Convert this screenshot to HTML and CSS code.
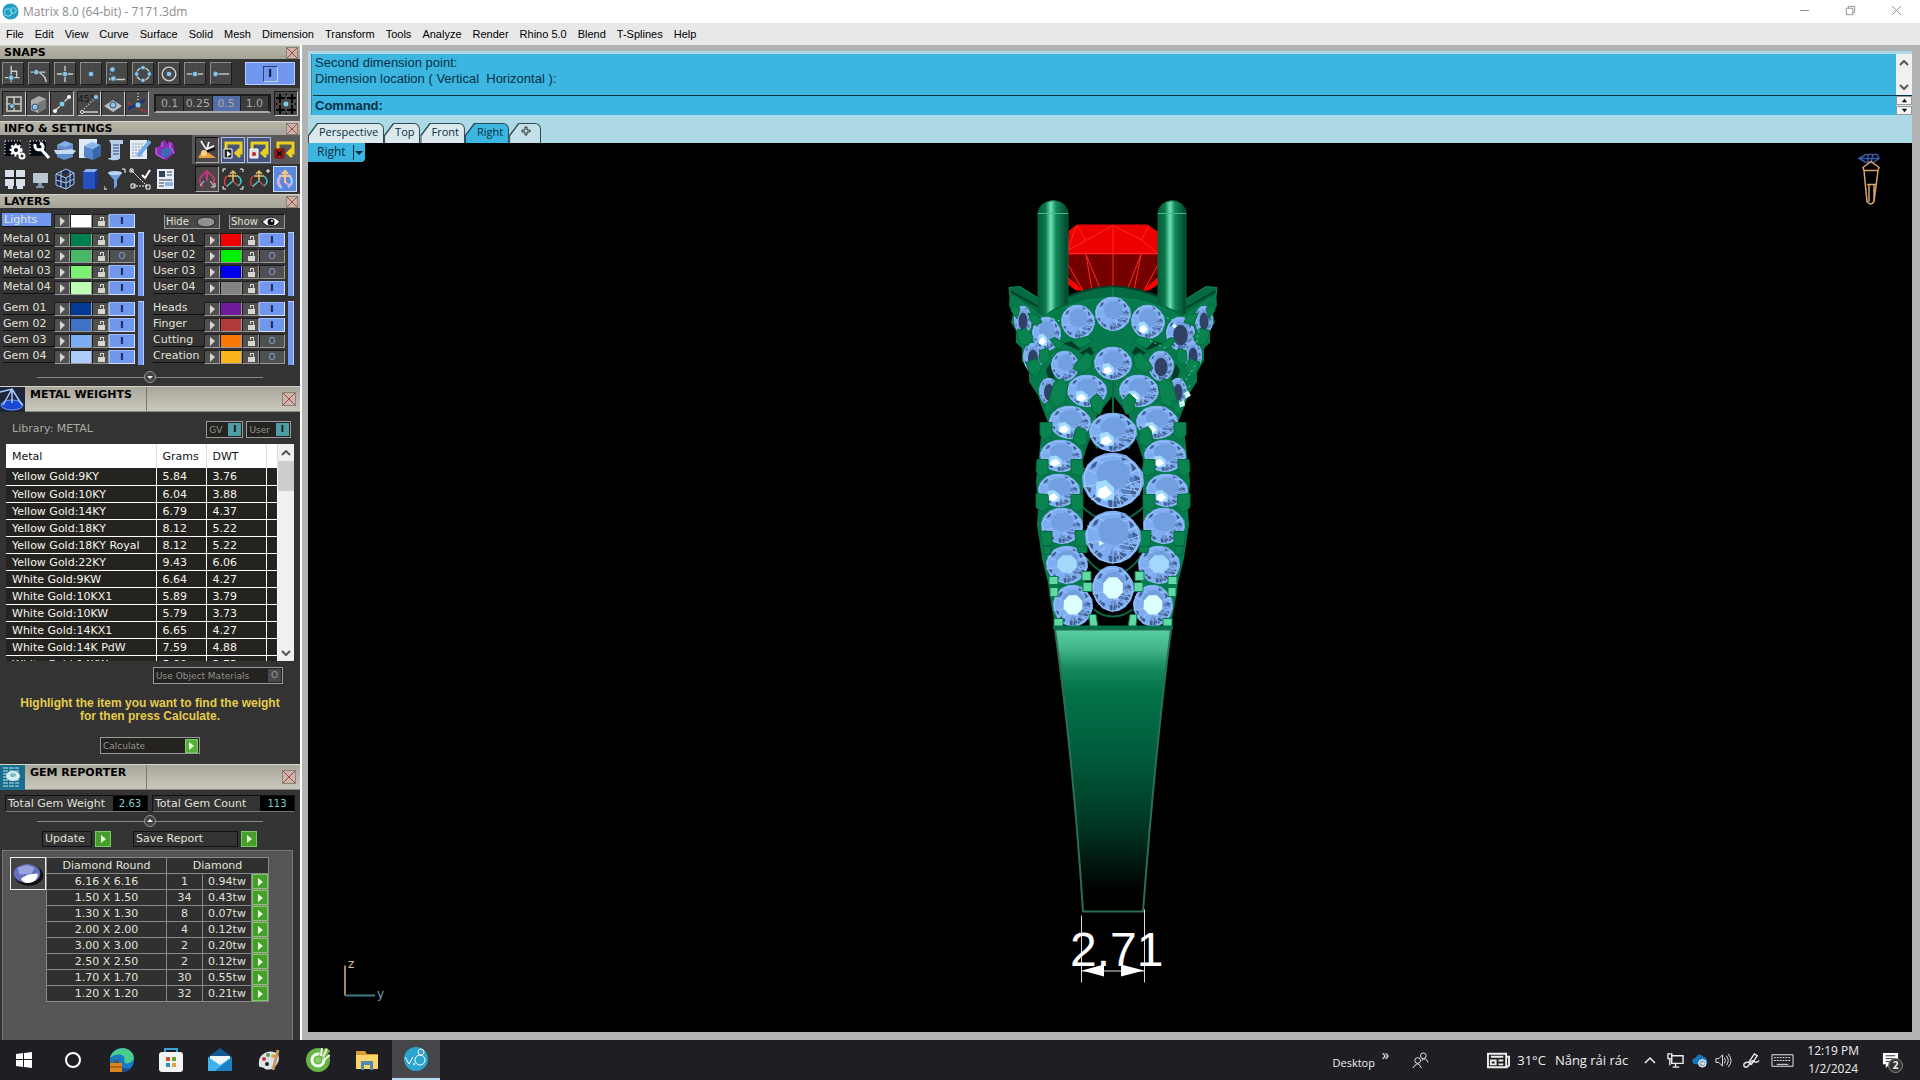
FILE: index.html
```html
<!DOCTYPE html>
<html lang="en">
<head>
    <meta charset="UTF-8">
    <meta name="viewport" content="width=device-width, initial-scale=1.0">
    <title>Matrix 8.0 (64-bit) - 7171.3dm</title>
    <link rel="stylesheet" href="styles.css">
</head>
<body>
    <header class="titlebar">
        <svg class="app-icon" viewBox="0 0 18 18"><circle cx="9" cy="9" r="8.500" fill="#239dc4"/><circle cx="6.500" cy="10" r="4" fill="none" stroke="#8fe0f5"/><circle cx="12" cy="8" r="3" fill="none" stroke="#8fe0f5"/></svg>
        <span class="title">Matrix 8.0 (64-bit) - 7171.3dm</span>
        <button class="win-btn" aria-label="Minimize"><svg viewBox="0 0 12 12"><path d="M1 6h10"/></svg></button>
        <button class="win-btn" aria-label="Restore"><svg viewBox="0 0 12 12"><path d="M1.500 3.500h7v7h-7zM3.500 3.500v-2h7v7h-2"/></svg></button>
        <button class="win-btn" aria-label="Close"><svg viewBox="0 0 12 12"><path d="M1 1l10 10M11 1L1 11"/></svg></button>
    </header>

    <nav class="menu">
        <a href="#">File</a><a href="#">Edit</a><a href="#">View</a><a href="#">Curve</a><a href="#">Surface</a><a href="#">Solid</a><a href="#">Mesh</a><a href="#">Dimension</a><a href="#">Transform</a><a href="#">Tools</a><a href="#">Analyze</a><a href="#">Render</a><a href="#">Rhino 5.0</a><a href="#">Blend</a><a href="#">T-Splines</a><a href="#">Help</a>
    </nav>

    <main>
        <aside>
            <div class="bar"><h2>SNAPS</h2><button class="close" aria-label="Close snaps"></button></div>
            <section class="snaps">
                <button class="tool" aria-label="Perpendicular"><svg viewBox="0 0 22 22"><path class="w" d="M9 2v18M2 15h16M9 8h6v6"/><circle class="dot" cx="9" cy="15" r="3"/></svg></button>
                <button class="tool" aria-label="Tangent"><svg viewBox="0 0 22 22"><path class="w" d="M2 9h16M7 9c6 0 11 4 12 11"/><circle class="dot" cx="8" cy="9" r="3"/></svg></button>
                <button class="tool" aria-label="Intersection"><svg viewBox="0 0 22 22"><path class="w" d="M11 2v18M2 11h18"/><circle class="dot" cx="11" cy="11" r="3"/></svg></button>
                <button class="tool" aria-label="Point"><svg viewBox="0 0 22 22"><circle class="dot" cx="11" cy="11" r="3"/></svg></button>
                <button class="tool" aria-label="Knot"><svg viewBox="0 0 22 22"><path class="w" d="M8 17h12M3 11h1M3 15v2h3"/><circle class="dot" cx="6" cy="6" r="3"/><circle class="dot" cx="7" cy="16" r="3"/></svg></button>
                <button class="tool" aria-label="Quad"><svg viewBox="0 0 22 22"><circle class="w" cx="11" cy="11" r="7"/><circle class="dot" cx="11" cy="4" r="2.500"/><circle class="dot" cx="11" cy="18" r="2.500"/><circle class="dot" cx="4" cy="11" r="2.500"/><circle class="dot" cx="18" cy="11" r="2.500"/></svg></button>
                <button class="tool" aria-label="Center"><svg viewBox="0 0 22 22"><circle class="w" cx="11" cy="11" r="7.500"/><circle class="dot" cx="11" cy="11" r="3"/></svg></button>
                <button class="tool" aria-label="Midpoint"><svg viewBox="0 0 22 22"><path class="w" d="M2 11h18"/><circle class="dot" cx="11" cy="11" r="3"/></svg></button>
                <button class="tool" aria-label="End"><svg viewBox="0 0 22 22"><path class="w" d="M5 11h15"/><circle class="dot" cx="5" cy="11" r="3"/></svg></button>
                <button class="power" aria-label="Snaps on"><i>I</i></button>
            </section>
            <section class="snaps second">
                <div class="group">
                    <button class="tool" aria-label="Grid snap"><svg viewBox="0 0 22 22"><path class="w" d="M4 4h14v14H4zM11 4v14M4 11h14"/><circle class="dot" cx="9" cy="13" r="2.500"/></svg></button>
                    <button class="tool" aria-label="Ortho"><svg viewBox="0 0 22 22"><path fill="#aaa" d="M4 7l8-4 7 3v9l-8 5-7-3z"/><path fill="#777" d="M11 10l8-4v9l-8 5z"/><circle class="dot" cx="8" cy="14" r="3"/></svg></button>
                    <button class="tool" aria-label="Planar"><svg viewBox="0 0 22 22"><path class="w" d="M4 18L18 4"/><circle fill="#fff" cx="4" cy="18" r="2"/><circle fill="#fff" cx="18" cy="4" r="2"/><circle class="dot" cx="11" cy="11" r="3"/></svg></button>
                </div>
                <div class="group">
                    <button class="tool" aria-label="45 degrees"><svg viewBox="0 0 22 22"><path class="w" d="M4 19h16"/><path class="w" stroke-dasharray="1 2" d="M4 18L18 4"/><text x="0" y="9" font-size="9">45°</text><circle class="dot" cx="18" cy="4" r="2.500"/><circle cx="4" cy="19" r="1.500" fill="#111" stroke="#fff"/></svg></button>
                    <button class="tool" aria-label="Plane"><svg viewBox="0 0 22 22"><path fill="#b9bfc0" d="M2 13l9-6 9 6-9 6z"/><circle class="dot" cx="11" cy="12" r="3"/></svg></button>
                    <button class="tool" aria-label="Project"><svg viewBox="0 0 22 22"><path stroke="#b33333" stroke-width="2" stroke-dasharray="2 1" d="M2 10l18 9"/><path stroke="#1c2f80" stroke-width="3" d="M2 16l17-9"/><path class="w" stroke-dasharray="1 2" d="M12 0v13"/><circle class="dot" cx="12" cy="12" r="3"/></svg></button>
                </div>
                <div class="steps"><button>0.1</button><button>0.25</button><button class="on">0.5</button><button>1.0</button></div>
                <button class="tool hash" aria-label="Grid"><svg viewBox="0 0 22 22"><path stroke="#000" stroke-width="2" d="M5 1v20M11 1v20M17 1v20M1 5h20M1 11h20M1 17h20"/><path stroke="#ccc" stroke-width=".7" d="M11 2v18M2 11h18"/><circle class="dot" cx="11" cy="11" r="3"/></svg></button>
            </section>

            <div class="bar"><h2>INFO &amp; SETTINGS</h2><button class="close" aria-label="Close info"></button></div>
            <section class="info">
                <div class="icons">
                    <button aria-label="Settings"><svg viewBox="0 0 22 22"><path fill="#050b14" d="M1 2h16v15H1z"/><path stroke="#fff" stroke-dasharray="1 2" d="M1 2h16M1 2v15"/><circle cx="12" cy="11" r="3.500" stroke="#fff" stroke-width="3"/><circle cx="12" cy="11" r="5.500" stroke="#fff" stroke-width="2" stroke-dasharray="2 2"/><circle cx="18" cy="17" r="2.500" stroke="#fff" stroke-width="2"/></svg></button>
                    <button aria-label="Tools"><svg viewBox="0 0 22 22"><path fill="#050b14" d="M1 2h16v15H1z"/><path stroke="#fff" stroke-dasharray="1 2" d="M1 2h16M1 2v15"/><path stroke="#fff" stroke-width="3" d="M6 5c-1 7 5 6 7 5s1-5-2-6M12 10l8 9"/></svg></button>
                    <button aria-label="Section"><svg viewBox="0 0 22 22"><path fill="#5f8ccc" d="M3 6l8-4 8 3v5H3zM3 15h16v3l-9 3-7-3z"/><path fill="#86ade4" d="M3 6l8-4 8 3-8 3z"/><path fill="#c5dcf5" d="M0 11l18-1 4 2-3 3H2z"/></svg></button>
                    <button aria-label="Object"><svg viewBox="0 0 22 22"><path fill="#dce9f7" d="M0 0h18v19H0z"/><path fill="#8bb4e6" d="M5 7l8-4 9 3-8 4z"/><path fill="#5785c9" d="M5 7l9 3v11l-9-3z"/><path fill="#3867aa" d="M14 10l8-4v11l-8 4z"/></svg></button>
                    <button aria-label="Report"><svg viewBox="0 0 22 22"><path fill="#b7cdea" d="M5 1h14v4h-3v14c0 3-12 3-12 0h3V5z"/><path stroke="#2c4773" d="M9 6h6M9 9h6M9 12h6M9 15h6"/></svg></button>
                    <button aria-label="Notes"><svg viewBox="0 0 22 22"><path fill="#e4edf6" d="M1 1h17v19H1z"/><path stroke="#8196ac" stroke-dasharray="2 1" d="M3 5h12M3 8h12M3 11h12M3 14h12M3 17h12"/><path stroke="#6ba9e8" stroke-width="4" d="M21 2L9 17"/></svg></button>
                    <button aria-label="Material"><svg viewBox="0 0 22 22"><path fill="#8c2bb5" d="M1 9l5-2 2-5 3-1 2 4 2-3 4 2 2 10-9 7-10-5z"/><path fill="#4068b8" d="M7 11l6-3 4 2v5l-6 4-4-3z"/><path stroke="#df75f5" d="M2 9v6l8 5M8 3v5M16 4v4l4 6"/></svg></button>
                </div>
                <div class="icons right lit">
                    <button class="sunk" aria-label="Tidy"><svg viewBox="0 0 22 22"><path stroke="#111" stroke-width="3" d="M6 3l5 9M13 4l-2 8 8-3"/><path stroke="#eee" stroke-width="2" d="M5 2l5 8M13 3l-2 7 7-3"/><path fill="#e6a03c" d="M2 19l4-7 7 2 7 5z"/><circle cx="8" cy="14" r="3" fill="#f5d18c"/></svg></button>
                    <button class="blue" aria-label="Play macro"><svg viewBox="0 0 22 22"><path stroke="#e9cf24" stroke-width="3" d="M4 10V4h15v10h-5m4-4l-4 4 4 4"/><path fill="#222" stroke="#fff" d="M2 10h8v9H2z"/><path fill="#fff" d="M5 12l4 3-4 3z"/></svg></button>
                    <button class="blue" aria-label="Record macro"><svg viewBox="0 0 22 22"><path stroke="#e9cf24" stroke-width="3" d="M4 10V4h15v10h-5m4-4l-4 4 4 4"/><path fill="#ddd" stroke="#fff" d="M2 10h8v9H2z"/><circle cx="6" cy="15" r="2" fill="#c22222"/></svg></button>
                    <button aria-label="Stop macro"><svg viewBox="0 0 22 22"><path stroke="#e9cf24" stroke-width="3" d="M4 10V4h15v10h-5m4-4l-4 4 4 4"/><path fill="#c21818" stroke="#661111" d="M1 10h9v9H1z"/><path stroke="#111" stroke-width="2" d="M3 12l5 5M8 12l-5 5"/></svg></button>
                </div>
                <div class="icons">
                    <button aria-label="Viewports"><svg viewBox="0 0 22 22"><path fill="#d6dfea" d="M1 2h20v16h-2v3h-6v-3H9v3H4v-3H1z"/><path stroke="#222" stroke-width="2" d="M11 2v16M0 10h22"/></svg></button>
                    <button aria-label="Display"><svg viewBox="0 0 22 22"><path fill="#bac6d4" d="M4 5h15v10H4z"/><path fill="#8391a8" d="M9 15h4v3h2v2H7v-2h2z"/></svg></button>
                    <button aria-label="Wireframe"><svg viewBox="0 0 22 22"><path fill="#1a2d50" stroke="#a9cbf6" d="M2 6l10-5 8 4v11l-8 5-10-4zM2 6l10 4 8-5M12 10v11M7 3v16M16 3v16M2 12l10 3 8-4"/></svg></button>
                    <button aria-label="Library"><svg viewBox="0 0 22 22"><path fill="#2450c0" d="M4 4h12v17H4z"/><path fill="#8fb1ef" d="M4 4l3-3h12l-3 3z"/><path fill="#1c378c" d="M16 4l3-3v16l-3 4z"/></svg></button>
                    <button aria-label="Filter"><svg viewBox="0 0 22 22"><path fill="#6f9fe2" d="M4 5h14l-5 7v6l-3 3v-9z"/><ellipse cx="11" cy="5" rx="7" ry="2" fill="#bed6f7"/><path stroke="#fff" d="M18 1h3v4M0 18v3h3"/></svg></button>
                    <button aria-label="Check"><svg viewBox="0 0 22 22"><path stroke="#fff" stroke-dasharray="2 1" d="M2 2l17 17M4 18h15"/><path stroke="#fff" d="M1 1h3v3H1zM2 16h4v4H2zM17 17h4v4h-4z"/><path stroke="#fff" stroke-width="2" d="M13 7l3 3 5-8"/></svg></button>
                    <button aria-label="Sheet"><svg viewBox="0 0 22 22"><path fill="#e4edf8" d="M3 1h17v20H3z"/><path fill="#334455" d="M5 3h6v6H5z"/><path stroke="#334455" d="M13 4h5M13 7h5M5 12h13M5 15h5M5 18h5"/><path fill="#8db3df" d="M11 14h8v4h-8z"/></svg></button>
                </div>
                <div class="icons right">
                    <button class="sunk" aria-label="Gumball"><svg viewBox="0 0 22 22"><path stroke="#c1377d" stroke-width="2" d="M11 3v10M8 6l3-3 3 3M8 6c-6 4-5 9-1 13M14 6c5 3 5 8 2 11"/><path stroke="#ddd" d="M14 13l5 6M19 15v4h-4M8 13l-4 5"/></svg></button>
                    <button aria-label="Gumball frame"><svg viewBox="0 0 22 22"><use href="#gumball"/><path stroke="#fff" d="M1 4V1h3M18 1h3v3M1 18v3h3M18 21h3v-3"/></svg></button>
                    <button aria-label="Gumball add"><svg viewBox="0 0 22 22"><use href="#gumball"/><path stroke="#fff" d="M18 3h4M20 1v4"/></svg></button>
                    <button class="active" aria-label="Gumball on"><svg viewBox="0 0 22 22"><path stroke="#a6d8ff" stroke-width="2" d="M8 7c-6 4-5 10 0 13M14 7c6 4 4 10 0 12"/><path stroke="#e2a5d2" stroke-width="2" d="M6 10q-3 5 1 8M11 14l5 4"/><path stroke="#f3c58c" stroke-width="2" d="M11 3v12M8 6l3-3 3 3M5 8h12"/></svg></button>
                </div>
            </section>

            <div class="bar"><h2>LAYERS</h2><button class="close" aria-label="Close layers"></button></div>
            <section class="layers">
                <div class="layer-top">
                    <div id="lights"></div>
                    <div class="vis">
                        <button>Hide <svg viewBox="0 0 20 12"><ellipse cx="10" cy="6" rx="9" ry="5" fill="#909090" stroke="#222"/></svg></button>
                        <button>Show <svg viewBox="0 0 20 12"><path fill="#fff" stroke="#111" d="M1 6q9-10 18 0q-9 9-18 0z"/><circle cx="10" cy="6" r="3.500" fill="#111"/><circle cx="11" cy="5" r="1" fill="#fff"/></svg></button>
                    </div>
                </div>
                <div class="layer-grid" id="layers"></div>
                <div class="divider"><button aria-label="Expand"><svg viewBox="0 0 8 8"><path d="M1 3h6L4 6z"/></svg></button></div>
            </section>

            <div class="bar tall">
                <svg class="bar-icon" viewBox="0 0 25 25"><path fill="#20263a" d="M0 0h25v25H0z"/><ellipse cx="12" cy="18" rx="11" ry="5" fill="#1949d0" stroke="#6ca0ff"/><path fill="none" stroke="#a7cdff" stroke-width="1.500" d="M0 5l12-3 10 16M12 2L3 18M12 2v14"/></svg>
                <h2>METAL WEIGHTS</h2><button class="close" aria-label="Close metal weights"></button>
            </div>
            <section class="weights">
                <div class="library"><span>Library: METAL</span><button class="switch">GV <i>I</i></button><button class="switch">User <i>I</i></button></div>
                <div class="list">
                    <div class="list-view">
                        <table>
                            <thead><tr><th class="metal">Metal</th><th class="num">Grams</th><th class="dwt">DWT</th><th></th></tr></thead>
                            <tbody id="metals"></tbody>
                        </table>
                    </div>
                    <div class="scroll">
                        <button aria-label="Scroll up"><svg viewBox="0 0 10 6"><path d="M1 5l4-4 4 4"/></svg></button>
                        <div class="thumb"></div>
                        <button aria-label="Scroll down"><svg viewBox="0 0 10 6"><path d="M1 1l4 4 4-4"/></svg></button>
                    </div>
                </div>
                <button class="switch materials">Use Object Materials <i class="off">O</i></button>
                <p>Highlight the item you want to find the weight<br>for then press Calculate.</p>
                <button class="switch calculate">Calculate <i class="go"></i></button>
            </section>

            <div class="bar tall">
                <svg class="bar-icon" viewBox="0 0 25 25"><path fill="#1b6d8c" d="M0 0h25v25H0z"/><path fill="none" stroke="#b9e6f2" stroke-dasharray="5 1" d="M3 3h16M3 6h16M3 9h16M3 12h16M3 15h16M3 18h16M3 21h16"/><ellipse cx="13" cy="11" rx="7" ry="5" fill="#d6eff5"/><ellipse cx="13" cy="10" rx="3" ry="2" fill="#7fb6c8"/></svg>
                <h2>GEM REPORTER</h2><button class="close" aria-label="Close gem reporter"></button>
            </div>
            <section class="reporter">
                <div class="totals">
                    <div class="total"><span>Total Gem Weight</span><b>2.63</b></div>
                    <div class="total"><span>Total Gem Count</span><b>113</b></div>
                </div>
                <div class="divider"><button aria-label="Collapse"><svg viewBox="0 0 8 8"><path d="M1 5h6L4 2z"/></svg></button></div>
                <div class="actions">
                    <button class="action update"><span>Update</span><i class="go"></i></button>
                    <button class="action save"><span>Save Report</span><i class="go"></i></button>
                </div>
                <div class="gem-panel">
                    <svg class="gem-pic" viewBox="0 0 36 32"><ellipse cx="19" cy="18" rx="15" ry="11" fill="#111"/><ellipse cx="17" cy="16" rx="14" ry="10" fill="#6470bd"/><path fill="#98a2dd" d="M7 10l10-3 8 3-3 6-13 1z"/><path fill="#fff" d="M11 21l7-4 10-1c2 5-5 11-12 10-4-1-5-3-5-5z"/></svg>
                    <table>
                        <colgroup><col class="size"><col class="count"><col class="weight"><col class="pick"></colgroup>
                        <thead><tr><th>Diamond Round</th><th colspan="3">Diamond</th></tr></thead>
                        <tbody id="stones"></tbody>
                    </table>
                </div>
            </section>
        </aside>

        <div class="workspace">
            <div class="command">
                <div class="history">
                    <p>Second dimension point:<br>Dimension location ( Vertical&nbsp; Horizontal ):</p>
                    <div class="scroll">
                        <button aria-label="History up"><svg viewBox="0 0 10 6"><path d="M1 5l4-4 4 4"/></svg></button>
                        <button aria-label="History down"><svg viewBox="0 0 10 6"><path d="M1 1l4 4 4-4"/></svg></button>
                    </div>
                </div>
                <div class="prompt">
                    <label for="cmd">Command:</label><input id="cmd" type="text">
                    <div class="spin"><button aria-label="Previous"><svg viewBox="0 0 8 8"><path d="M1 6h6L4 2z"/></svg></button><button aria-label="Next"><svg viewBox="0 0 8 8"><path d="M1 2h6L4 6z"/></svg></button></div>
                </div>
            </div>
            <nav class="tabs">
                <a href="#">Perspective</a><a href="#">Top</a><a href="#">Front</a><a href="#" class="current">Right</a><a href="#" class="add" aria-label="Add viewport"><svg viewBox="0 0 10 10"><path d="M4 1h2v3h3v2H6v3H4V6H1V4h3z"/></svg></a>
            </nav>
            <div class="viewport">
                <svg class="scene" viewBox="308 143 1604 888">
                    <defs>
                        <linearGradient id="band" x2="0" y2="1"><stop offset="0" stop-color="#58cfa4"/><stop offset=".07" stop-color="#42b487"/><stop offset=".14" stop-color="#158a5d"/><stop offset=".22" stop-color="#04734a"/><stop offset=".45" stop-color="#005c3b"/><stop offset=".7" stop-color="#003522"/><stop offset=".93" stop-color="#000"/></linearGradient>
                        <linearGradient id="post"><stop offset="0" stop-color="#045a37"/><stop offset=".25" stop-color="#0a7a4c"/><stop offset=".43" stop-color="#74e2b4"/><stop offset=".6" stop-color="#128a5a"/><stop offset="1" stop-color="#02402a"/></linearGradient>
                        <g id="gumball"><path stroke="#e9bd6c" stroke-width="1.500" d="M11 3v10M8 6l3-3 3 3M6 8h10"/><path stroke="#c43" stroke-width="1.500" d="M5 8c-4 4-3 9 1 11M11 13l5 5"/><path stroke="#4cc" stroke-width="1.500" d="M16 8c5 4 3 8 0 10M11 13l-6 5"/></g>
                        <!-- round stone, stretched to each setting -->
                        <symbol id="gem" viewBox="0 0 60 60" preserveAspectRatio="none">
                            <path fill="#7fadf2" d="M22 1l10-1 11 3 9 8 7 10 1 12-4 11-8 9-10 5-11 1-12-4-9-9L1 36 0 25l5-12 8-8z"/>
                            <path fill="#3f5f93" d="M47 11l6 5-4 4zM51 24l6 3-1 5-7-2zM49 37l7 1-5 9-6-4zM38 46l7 3-7 6-5-2zM25 50l8 1 1 6-8 1zM12 44l7 5-2 4-7-6zM3 35l6 3-1 5-4-4zM10 12l5-3-2 6-5 3zM38 3l7 4-6 2z"/>
                            <path fill="#5a80bf" d="M37 38l9-3 2 9-8 2zM29 42l7 3-2 6-7-2zM44 24l8 3-2 8-7-2z"/>
                            <path fill="none" stroke="#a5caff" d="M30 43v17M30 43l14 12M30 43l24 2M42 34l17-6M44 23l13-5M38 12l12-2M22 12L11 7M15 23L2 17M16 34L1 36M22 41L9 50M8 12c12-12 36-12 45 4s2 30-10 38-30 3-37-12-3-24 2-30zM36 37l20 4M34 40l4 17M44 28l10 16"/>
                            <path fill="#729fdf" d="M24 9l12-1 9 7 2 11-6 10-11 3-12-5-4-11 3-9z"/>
                        </symbol>
                        <symbol id="lit" viewBox="0 0 60 60" preserveAspectRatio="none"><use href="#gem" width="60" height="60"/><path fill="#a4dcff" d="M14 31l9-2 8 8v12l-9 2-9-5z"/><path fill="#fff" d="M16 39l7-4 6 8-7 6-7-3z"/></symbol>
                        <symbol id="bright" viewBox="0 0 60 60" preserveAspectRatio="none"><use href="#gem" width="60" height="60"/><path fill="#dbffff" d="M24 15h12l8 8v11l-8 8H24l-8-8V23z"/></symbol>
                        <symbol id="soft" viewBox="0 0 60 60" preserveAspectRatio="none"><use href="#gem" width="60" height="60"/><path fill="#a3d7fb" d="M24 15h12l8 8v11l-8 8H24l-8-8V23z"/></symbol>
                        <symbol id="side" viewBox="0 0 60 60" preserveAspectRatio="none"><use href="#gem" width="60" height="60"/><ellipse cx="30" cy="32" rx="15" ry="18" fill="#2f4266"/></symbol>
                        <g id="shank">
                            <path fill="#067a4c" d="M1113 286c-26 1-49 13-69 26-12-7-22-17-34-24l-1 17 4 9-2 8 5 8 0 12 6 6 0 12 7 12 0 9 9 14 4 12 6 15-7 14-2 20-3 24 2 30-1 14 5 34 6 24 3 21 3 16h59z"/>
                            <path d="M1097 415l16-20v234h-16l-9-18-5-60v-92z"/>
                            <path fill="none" stroke="#0b6845" stroke-width="2" d="M1113 378v40M1084 450l6-14 8 12M1082 506q14 14 31 16M1086 557q12 16 27 18M1094 609q8 7 19 7"/>
                            <path fill="#046a42" stroke="#0c8a58" d="M1009 287l11-1 24 15 9 2c20-10 34-16 60-16v10c-28 1-51 9-69 20-12-7-22-17-34-22z"/>
                            <path fill="none" stroke="#013f29" stroke-width="2" d="M1011 291l32 18q35-22 70-23"/>
                            <path fill="#023c27" d="M1063 343l14-4 8 6-6 5zM1080 352l10-6 4 6-5 7zM1046 370l4-7 5 16-5 4z"/>
                        </g>
                        <g id="prongs">
                            <g fill="#098451" stroke="#046a41">
                                <path d="M1040 422h12v13l-8 5-4-6zM1075 430l3-4 8 4 1 13-8 3-6-6zM1037 459h11v14l-7 3-5-5zM1071 459h11l2 13-5 4-8-3zM1036 493l12 1 1 12-6 6-7-5zM1071 494h12v14l-7 4-5-6zM1040 531h12v14h-10zM1075 530h12v16h-11zM1044 546h7v8h-7zM1077 546h10v6h-9z"/>
                                <path d="M1090 399l7-6 8 9-5 12-7-3zM1056 347l-6-8 5-2 9 6-3 6zM1016 330l10-2 7 8-5 9-8-2zM1026 362l10-4 6 9-6 10-6-4zM1040 350l8-2 2 10-6 7-5-5zM1054 382l8-4 6 6-3 18-12 6-4-8zM1077 361l9-9 7 4-2 11-9 6-9-5zM1071 340l16-4 6 5-13 7zM1013 304l7 4-3 10-6-8zM1028 313l10 1 4 8-9 3zM1044 404l8-5 3 8-9 8z"/>
                            </g>
                            <path fill="#60d9a5" stroke="#0a7d50" d="M1049 576h9v8h-9zM1050 587h8v9h-8zM1082 571h9v9h-9zM1083 582h9v9h-9zM1054 618h9v9h-9zM1089 614h7l2 13h-8z"/>
                        </g>
                    </defs>

                    <!-- centre stone -->
                    <path fill="#750000" d="M1067 252h92v20l-15 20h-62l-15-20z"/>
                    <path fill="#ef0000" d="M1069 230l8-6h70l11 7 1 23h-92z"/>
                    <path fill="none" stroke="#ff2a1e" d="M1076 225l-8 25 18-10 27-15 28 14 18 15M1086 240l-9-15M1141 240l8-15M1113 225v65M1067 253h92M1086 254l15 36M1086 254l6 36M1141 254l-14 36M1141 254l-7 36M1068 264l15 26M1158 264l-14 26"/>
                    <path fill="#f00" d="M1068 276l15 14h-7l-8-6zM1158 276l-15 14h6l9-6z"/>

                    <use href="#shank"/>
                    <use href="#shank" transform="matrix(-1 0 0 1 2226 0)"/>
                    <path fill="url(#post)" stroke="#06643f" d="M1038 312V212q2-11 15-12 13 1 15 12v92q-14 3-24 12z"/>
                    <path fill="url(#post)" stroke="#06643f" d="M1158 303v-91q2-11 14-12 12 1 14 12v102q-14-4-28-11z"/>
                    <path stroke="#4ab98a" d="M1038 213h30M1158 213h28"/>

                    <use href="#side" x="1014" y="305" width="18" height="30"/><use href="#side" x="1195" y="305" width="18" height="30"/>
                    <use href="#lit" x="1032" y="316" width="29" height="35"/><use href="#side" x="1166" y="316" width="29" height="35"/>
                    <use href="#gem" x="1061" y="304" width="34" height="35"/><use href="#lit" x="1131" y="304" width="34" height="35"/>
                    <use href="#gem" x="1095" y="296" width="36" height="35"/>
                    <use href="#side" x="1023" y="342" width="20" height="30"/><use href="#side" x="1184" y="340" width="18" height="30"/>
                    <use href="#gem" x="1051" y="350" width="28" height="31"/><use href="#side" x="1148" y="350" width="26" height="31"/>
                    <use href="#lit" x="1094" y="346" width="38" height="34"/>
                    <use href="#side" x="1039" y="377" width="20" height="28"/><use href="#side" x="1169" y="377" width="18" height="28"/>
                    <use href="#lit" x="1067" y="374" width="40" height="33"/><use href="#lit" x="1119" y="374" width="40" height="33"/>
                    <use href="#lit" x="1049" y="405" width="42" height="34"/><use href="#lit" x="1136" y="405" width="42" height="34"/>
                    <use href="#lit" x="1040" y="439" width="42" height="33"/><use href="#lit" x="1144" y="439" width="42" height="33"/>
                    <use href="#lit" x="1038" y="473" width="42" height="34"/><use href="#lit" x="1146" y="473" width="42" height="34"/>
                    <use href="#gem" x="1041" y="507" width="42" height="37"/><use href="#gem" x="1143" y="507" width="42" height="37"/>
                    <use href="#soft" x="1046" y="545" width="42" height="39"/><use href="#soft" x="1138" y="545" width="42" height="39"/>
                    <use href="#bright" x="1053" y="584" width="40" height="43"/><use href="#bright" x="1133" y="584" width="40" height="43"/>
                    <use href="#prongs"/>
                    <use href="#prongs" transform="matrix(-1 0 0 1 2226 0)"/>
                    <use href="#lit" x="1089" y="412" width="48" height="40"/>
                    <use href="#lit" x="1082" y="452" width="62" height="57"/>
                    <use href="#gem" x="1085" y="510" width="56" height="54"/>
                    <use href="#bright" x="1092" y="565" width="42" height="47"/>
                    <path fill="#d9ffff" d="M1099 540l5 3-5 2zM1110 546l2 4M1184 393l4-3 3 5-5 3zM1179 402l5-3 1 6-5 2zM1172 325l3-2 2 3-3 2z"/>
                    <path stroke="#54e3a6" stroke-dasharray="2 3" d="M1048 317l14 4M1162 316l14 4M1200 325l-4 20M1195 365l-10 16M1150 340l16 8M1190 385l-10 22"/>

                    <path fill="url(#band)" stroke="#2c6e52" stroke-width="2" d="M1055 629h116c-10 76-21 190-28 282h-60c-6-92-15-190-28-282z"/>
                    <path stroke="#05714a" stroke-width="4" d="M1053 627h120"/>

                    <!-- dimension -->
                    <path stroke="#ddd" d="M1081.500 915v67M1144.500 909v73M1082 970.500h62"/>
                    <text class="dim" x="1070" y="965">2.71</text>
                    <path fill="#fff" d="M1082 970l22-6v12zM1144 970l-23-6v12z"/>

                    <!-- axes -->
                    <path stroke="#a18a5e" stroke-width="2" d="M345 965v30"/><path stroke="#3b7d80" stroke-width="2" d="M345 995h30"/>
                    <text class="axis z" x="348" y="967">z</text><text class="axis y" x="377" y="997">y</text>

                    <!-- view indicator -->
                    <path fill="none" stroke="#3c58a8" stroke-width="1.500" d="M1859 158l7-4h11l2 4-6 4h-7zM1859 158h20M1868 154v8M1873 154l-2 8"/>
                    <path fill="none" stroke="#d9a566" stroke-width="1.500" d="M1871 161l-8 6 1 3h14l1-3zM1864 170l3 31q4 5 7 0l4-31M1867 184h9M1869 184v17M1874 184v17"/>
                </svg>
                <button class="view-name"><span>Right</span><i><svg viewBox="0 0 8 8"><path d="M0 2h8L4 6z"/></svg></i></button>
            </div>
        </div>
    </main>

    <footer>
        <div class="apps">
            <button aria-label="Start"><svg viewBox="0 0 24 24"><path fill="#fff" d="M4 6l7-1v6H4zM12 5l8-1v7h-8zM4 12h7v7l-7-1zM12 12h8v8l-8-1z"/></svg></button>
            <button aria-label="Cortana"><svg viewBox="0 0 24 24"><circle cx="12" cy="12" r="7" fill="none" stroke="#fff" stroke-width="2"/></svg></button>
            <button aria-label="Edge"><svg viewBox="0 0 24 24"><circle cx="12" cy="12" r="12" fill="#1979c4"/><path fill="#48cf8d" d="M0 10C2 0 17-4 23 6c4 9-9 12-9 7 3-5-5-10-14-3z"/><path fill="#174b91" d="M8 12c0 8 6 10 13 8-5 6-16 5-16-4z"/><path fill="#dc841d" d="M0 15h12v9H0z"/><path fill="none" stroke="#7c4309" d="M4 15v-2h4v2M0 19h12"/></svg></button>
            <button aria-label="Store"><svg viewBox="0 0 24 24"><path fill="none" stroke="#3aa5dc" stroke-width="2" d="M6 6V1h12v5"/><rect y="4" width="24" height="20" rx="3" fill="#f3f3f3"/><path fill="#c55134" d="M7 9h4v4H7z"/><path fill="#6e9d37" d="M13 9h4v4h-4z"/><path fill="#2e92bd" d="M7 15h4v4H7z"/><path fill="#daa73a" d="M13 15h4v4h-4z"/></svg></button>
            <button aria-label="Mail"><svg viewBox="0 0 24 24"><path fill="#135a92" d="M0 9l12-9 12 9v5H0z"/><path fill="#ecf6fb" d="M2 8h20v9H2z"/><path fill="#3fb4ea" d="M0 9l12 8 12-8v14H0z"/><path fill="#1c80c7" d="M24 9v14H7z"/></svg></button>
            <button aria-label="Paint"><svg viewBox="0 0 24 24"><path fill="#dce5e9" d="M2 14C2 5 14 0 21 6c4 9-6 18-13 15-3-4-7 1-6-7z"/><circle cx="7" cy="11" r="2" fill="#cc3333"/><circle cx="11" cy="7" r="2" fill="#4b9e50"/><circle cx="16" cy="8" r="2" fill="#e3a72f"/><circle cx="10" cy="16" r="2" fill="#222"/><path stroke="#c59561" stroke-width="3" d="M21 2l-5 20"/></svg></button>
            <button aria-label="Coc Coc"><svg viewBox="0 0 24 24"><circle cx="12" cy="12" r="12" fill="#67b345"/><circle cx="12" cy="12" r="6" fill="none" stroke="#f4fff0" stroke-width="3"/><circle cx="12" cy="12" r="3" fill="#8ccb6c"/><path stroke="#67b345" stroke-width="6" d="M15 9l7-8"/><path stroke="#f7efe5" stroke-width="2" d="M15 8l1-8M17 9l4-8M18 12l6-5"/></svg></button>
            <button aria-label="Files"><svg viewBox="0 0 24 24"><path fill="#d99a30" d="M1 3h9l2 3h11v5H1z"/><path fill="#f9d468" d="M1 7h22v14H1z"/><path fill="#4e8bae" d="M6 13h12v9h-3v-5H9v5H6z"/></svg></button>
            <button class="running" aria-label="Matrix"><svg viewBox="0 0 24 24"><circle cx="12" cy="12" r="12" fill="#2ba5cf"/><path fill="none" stroke="#fff" d="M1 10l4 7 4-7"/><circle cx="10" cy="17" r="1" fill="#fff"/><circle cx="16" cy="13" r="5" fill="none" stroke="#fff"/><circle cx="17" cy="5" r="3" fill="none" stroke="#fff"/></svg></button>
        </div>
        <div class="tray">
            <span class="desktop">Desktop <sup>»</sup></span>
            <svg class="people" viewBox="0 0 18 18"><circle cx="6" cy="9" r="3"/><path d="M1 17q5-9 9 0M10 9q5-4 7 2"/><circle cx="12" cy="4" r="3"/></svg>
            <svg class="news" viewBox="0 0 24 16"><path stroke-width="2" d="M1 1h19v14H1zM20 4h3v9q-1 2-3 2M4 4h13M4 8h5v4H4zM12 8h5M12 12h5"/></svg>
            <span class="weather"><span>31°C</span><span>Nắng rải rác</span></span>
            <svg class="up" viewBox="0 0 12 8"><path stroke-width="1.500" d="M1 7l5-5 5 5"/></svg>
            <svg viewBox="0 0 18 18"><path stroke-width="1.500" d="M5 4h12v8H5zM9 12v4M6 16h7M1 2h4v5H1zM3 7v7"/></svg>
            <svg viewBox="0 0 18 18"><path fill="#1675be" stroke="none" d="M2 12q-2-5 3-6 3-6 8-1 5 1 4 8H4z"/><circle cx="12" cy="12" r="4" fill="#88abc0" stroke="#fff"/><path d="M10 12h4M12 10l2 2-2 2"/></svg>
            <svg viewBox="0 0 18 18"><path d="M1 7h3l4-4v12l-4-4H1zM10 6q2 3 0 6M12 4q4 5 0 10M14 2q6 7 0 14"/></svg>
            <svg class="pen" viewBox="0 0 18 18"><path stroke-width="1.500" d="M6 11l6-9 3 2-6 9zM6 11c-7-1-6 6-2 5 4-2 4-9 8-6 2 2 4 0 5-1M6 11l3 2"/></svg>
            <svg class="keys" viewBox="0 0 24 14"><path d="M1 1h22v12H1zM6 11h12"/><path stroke-dasharray="2 1" d="M3 4h18M3 7h18"/></svg>
            <time>12:19 PM<br>1/2/2024</time>
            <div class="notes"><svg viewBox="0 0 18 18"><path fill="#fff" stroke="none" d="M1 1h16v12H8l-4 4v-4H1z"/><path stroke="#222" d="M4 4h10M4 7h10M4 10h7"/></svg><b>2</b></div>
        </div>
    </footer>

    <script src="script.js"></script>
</body>
</html>
```
FILE: styles.css
```css
:root{
    --panel: #333333;
    --panel-light: #585858;
    --blue: #7198ee;
    --cyan: #3cb6e0;
    --pale: #add8e6;
}
*{
    box-sizing: border-box;
}
body{
    margin: 0;
    height: 100vh;
    display: grid;
    grid-template-rows: 23px 22px minmax(0, 1fr) 40px;
    font-family: "Liberation Sans", Arial, sans-serif;
    font-size: 11px;
    overflow: hidden;
}
button, input{
    font: inherit;
    color: inherit;
    margin: 0;
    padding: 0;
    border: 0;
    background: none;
}
a{
    color: inherit;
    text-decoration: none;
}
i{
    font-style: normal;
}
h2, p{
    margin: 0;
}

.titlebar{
    display: flex;
    align-items: center;
    background: #fff;
    color: #8c8c8c;
    font-family: "Open Sans", sans-serif;
    font-size: 11px;
    padding-left: 2px;
}
.app-icon{
    width: 17px;
    height: 17px;
    margin-right: 4px;
}
.title{
    flex: 1;
    font-size: 12px;
}
.win-btn{
    width: 46px;
    height: 22px;

    svg{
        width: 11px;
        height: 11px;
        fill: none;
        stroke: #8c8c8c;
    }
}
.win-btn:last-child{
    margin-right: 1px;
}
.menu{
    display: flex;
    align-items: center;
    gap: 11px;
    padding-left: 6px;
    background: #e8e8e8;
}
main{
    display: flex;
    min-height: 0;
    background: #fff;
}

/* side panels */
aside{
    width: 300px;
    flex-shrink: 0;
    background: var(--panel);
    color: #e2e2d8;
    font-family: "DejaVu Sans", Verdana, sans-serif;
    overflow: hidden;
}
.bar{
    display: flex;
    align-items: center;
    justify-content: space-between;
    height: 14px;
    padding: 0 2px 0 4px;
    color: #000;
    background: linear-gradient(#b8b5a9, #a5a297);
    border-top: 1px solid #d5d3c9;

    h2{
        font-size: 11px;
        line-height: 12px;
    }
    &.tall{
        height: 26px;
        padding: 0 4px 0 0;
        background: linear-gradient(#a9a69c, #cac7bd);
        border-bottom: 1px solid #888;

        h2{
            width: 122px;
            height: 24px;
            line-height: 15px;
            padding-left: 5px;
            margin-right: auto;
            border-right: 1px solid #777;
        }
    }
}
.bar-icon{
    width: 25px;
    height: 25px;
}
.close{
    width: 12px;
    height: 12px;
    border: 1px solid #8c8278;
    background:
        linear-gradient(45deg, transparent 46%, #b0413e 46% 54%, transparent 54%),
        linear-gradient(-45deg, #c9b5ac 46%, #b0413e 46% 54%, #c9b5ac 54%);
}
.tall .close{
    width: 14px;
    height: 14px;
}

.snaps{
    display: flex;
    align-items: center;
    gap: 4px;
    height: 29px;
    padding: 0 2px;

    &.second{
        gap: 3px;
        height: 33px;
        padding-bottom: 2px;
        background: var(--panel-light);
    }
}
.tool{
    width: 22px;
    height: 23px;
    background: #484848;
    border: 1px solid #8b8b8b;
    border-right-color: #1c1c1c;
    border-bottom-color: #1c1c1c;

    svg{
        display: block;
        width: 20px;
        height: 20px;
        fill: none;
    }
    text{
        fill: #111;
        stroke: none;
    }
}
.w{
    stroke: #cfcfc4;
    stroke-width: 1.5;
    fill: none;
}
.dot{
    fill: #8cc5e8;
    stroke: #34566c;
}
.second .tool{
    width: 24px;
    height: 25px;
    border-color: #1c1c1c #ccc #ccc #1c1c1c;

    svg{
        width: 22px;
        height: 22px;
    }
}
.group{
    display: flex;
}
.power{
    width: 50px;
    height: 23px;
    margin-left: auto;
    margin-right: 3px;
    background: var(--blue);
    border: 1px solid #b8ccff;
    font-weight: bold;
    color: #0b1a44;

    i{
        display: block;
        width: 15px;
        margin: 0 auto;
        line-height: 14px;
        border: 1px solid #2a4079;
        border-right-color: #c7d6ff;
        border-bottom-color: #c7d6ff;
    }
}
.steps{
    display: flex;
    flex: 1;
    height: 19px;
    margin-left: 2px;
    border: 2px solid #1c1c1c;
    border-bottom-color: #aaa;
    color: #a9a9a0;
    background: #3c3c3c;

    button{
        flex: 1;
        border-right: 1px solid #1c1c1c;
    }
    .on{
        background: #536da8;
    }
}

.info{
    display: grid;
    grid-template-columns: 192px 108px;
    grid-template-rows: 29px 30px;
}
.icons{
    display: flex;
    align-items: center;
    gap: 1px;
    padding-left: 3px;

    button{
        width: 24px;
        height: 26px;
    }
    svg{
        display: block;
        width: 22px;
        height: 22px;
        margin: 0 auto;
        fill: none;
    }
    &.right{
        gap: 2px;

        button{
            width: 24px;
        }
    }
    &.lit{
        background: var(--panel-light);
    }
    .sunk{
        border: 1px solid #aaa;
        border-top-color: #111;
        border-left-color: #111;
        background: #4b4747;
    }
    .blue{
        background: #47557c;
        border: 1px solid #a9bbe8;
    }
    .active{
        background: #5d89dc;
        border: 1px solid #ccdcff;
    }
}

.layers{
    height: 178px;
    padding-top: 5px;
}
.layer-top{
    display: flex;
    justify-content: space-between;
    padding-right: 15px;
    height: 19px;
}
.layer-grid{
    display: grid;
    grid-template-columns: 144px 149px;
    grid-template-rows: 64px 64px;
    column-gap: 6px;
    row-gap: 5px;
    height: 137px;
}
.set{
    display: flex;
    justify-content: space-between;

    &::after{
        content: "";
        width: 5px;
        background: var(--blue);
        border-right: 1px solid #b9caf5;
        border-top: 1px solid #b9caf5;
    }
}
.set:nth-child(even)::after{
    margin-right: 5px;
}
.layer{
    display: grid;
    grid-template-columns: 51px 16px 22px 17px 26px;
    height: 16px;
    padding-left: 3px;
    font-size: 11px;

    .name{
        line-height: 13px;
        height: 14px;
        border-bottom: 1px solid #111;
        white-space: nowrap;
    }
    button, .swatch{
        height: 14px;
        margin-top: 1px;
        background: #505050;
        border: 1px solid #999;
        border-top-color: #1c1c1c;
        border-left-color: #1c1c1c;
        font-size: 9px;
        line-height: 11px;
        text-align: center;
    }
    svg{
        display: block;
        width: 10px;
        height: 11px;
        margin: 0 auto;
        fill: #d6d6cc;
    }
    .on{
        background: var(--blue);
        border-color: #9db8f8 #d5e0ff #d5e0ff #9db8f8;
        color: #0b1a44;
        font-weight: bold;
    }
    .off{
        color: #7fa3dd;
    }
}
.layer.picked .name{
    background: var(--blue);
    margin-left: -1px;
    padding-left: 2px;
    margin-right: 3px;
}
.vis{
    display: flex;
    gap: 9px;
    padding-top: 1px;

    button{
        display: flex;
        align-items: center;
        justify-content: space-between;
        width: 56px;
        height: 15px;
        padding: 0 3px 0 1px;
        border: 1px solid #999;
        border-top-color: #111;
        font-size: 10px;
        background: #484848;
    }
    svg{
        width: 20px;
        height: 12px;
    }
}
.divider{
    display: flex;
    align-items: center;
    justify-content: center;
    height: 16px;
    margin: 0 37px;
    background: linear-gradient(#888, #888) center / 100% 1px no-repeat;

    button{
        width: 12px;
        height: 12px;
        border-radius: 50%;
        border: 1px solid #999;
        background: #444;
    }
    svg{
        display: block;
        width: 8px;
        height: 8px;
        margin: 0 auto;
        fill: #eee;
    }
}

.weights{
    display: flex;
    flex-direction: column;
    height: 352px;
    padding: 9px 6px 0;
}
.library{
    display: flex;
    gap: 3px;
    height: 23px;
    padding-right: 3px;
    color: #a9a9a4;

    span{
        flex: 1;
        padding: 1px 6px;
    }
}
.switch{
    display: flex;
    align-items: center;
    justify-content: space-between;
    height: 17px;
    padding: 0 1px 0 2px;
    border: 1px solid #999;
    background: #24231f;
    color: #929292;
    font-size: 9px;

    i{
        width: 13px;
        line-height: 13px;
        margin-left: 6px;
        background: #4f9da4;
        color: #111;
        font-weight: bold;
        text-align: center;
    }
    .off{
        background: #484848;
        color: #999;
        font-weight: normal;
    }
}
.list{
    display: flex;
    height: 217px;
    background: #24231f;
    color: #f4f4ee;
}
.list-view{
    flex: 1;
    overflow: hidden;

    table{
        width: 100%;
        border-collapse: collapse;
        table-layout: fixed;
    }
    th, td{
        padding: 0 0 0 6px;
        font-weight: normal;
        text-align: left;
        white-space: nowrap;
        border-right: 1px solid #fff;
    }
    th{
        height: 24px;
        background: #fff;
        color: #111;
        border-right-color: #ddd;
    }
    td{
        height: 17px;
        padding-top: 1px;
        line-height: 15px;
        border-bottom: 1px solid #fff;
    }
    .metal{
        width: 150px;
    }
    .num{
        width: 50px;
    }
    .dwt{
        width: 60px;
    }
}
.scroll{
    display: flex;
    flex-direction: column;
    width: 16px;
    background: #f0f0f0;

    button{
        height: 17px;
    }
    button:last-child{
        margin-top: auto;
    }
    svg{
        display: block;
        width: 10px;
        height: 6px;
        margin: 0 auto;
        fill: none;
        stroke: #555;
        stroke-width: 2;
    }
}
.thumb{
    height: 30px;
    background: #cdcdcd;
}
.materials{
    width: 130px;
    margin: 6px 11px 0 auto;
}
.weights p{
    margin-top: 13px;
    text-align: center;
    color: #e6cb4b;
    font-family: "Liberation Sans", sans-serif;
    font-size: 12px;
    font-weight: bold;
    line-height: 13px;
}
.calculate{
    width: 100px;
    margin: 14px auto 0;
}
.go{
    background: #469e2b;
    border: 1px solid #7cc766;

    &::after{
        content: "";
        display: block;
        width: 0;
        height: 0;
        margin: 2px auto;
        border: 4px solid transparent;
        border-left: 5px solid #e6ffd8;
        border-right: 0;
    }
}
.calculate .go{
    background: #56b03c;
}

.reporter{
    padding: 5px 2px 0;
}
.totals{
    display: flex;
    gap: 4px;
    padding: 0 3px;
}
.total{
    display: flex;
    flex: 1;
    height: 17px;
    line-height: 15px;
    border: 1px solid #111;
    border-bottom-color: #777;

    span{
        flex: 1;
        padding-left: 2px;
        white-space: nowrap;
    }
    b{
        width: 34px;
        background: #000;
        color: #7fc9c9;
        font-size: 10px;
        font-weight: normal;
        text-align: center;
    }
}
.actions{
    display: flex;
    gap: 22px;
    padding: 1px 0 3px 40px;
}
.action{
    display: flex;
    gap: 3px;
    height: 16px;

    span{
        flex: 1;
        padding-left: 2px;
        border: 1px solid #111;
        line-height: 14px;
        text-align: left;
    }
    .go{
        width: 16px;
        height: 16px;
    }
    .go::after{
        margin: 3px 5px;
    }
}
.update{
    width: 69px;
}
.save{
    width: 124px;
}
.reporter .divider{
    height: 18px;
    margin: 0 35px;
}
.gem-panel{
    display: flex;
    align-items: flex-start;
    height: 200px;
    width: 291px;
    padding: 6px 0 0 7px;
    background: #555;
    border: 1px solid #777;

    table{
        width: 222px;
        border-collapse: collapse;
        table-layout: fixed;
        background: #303030;
    }
    th, td{
        height: 16px;
        padding: 0;
        border: 1px solid #888;
        font-weight: normal;
        line-height: 14px;
        text-align: center;
    }
    .size{
        width: 120px;
    }
    .count{
        width: 36px;
    }
    .weight{
        width: 49px;
    }
    .pick{
        width: 17px;
    }
    .go{
        display: block;
        width: 16px;
        height: 15px;
    }
}
.gem-pic{
    width: 36px;
    height: 33px;
    border: 1px solid #eee;
    background: #444;
}

/* drawing area */
.workspace{
    flex: 1;
    min-width: 0;
    display: flex;
    flex-direction: column;
    margin-left: 2px;
    border: solid #b2b3b3;
    border-width: 6px 8px 8px 6px;
    background: var(--pale);
    color: #063046;
}
.command{
    margin: 3px 0 0 3px;
    padding-left: 1px;
    border-left: 1px solid #4d7f93;
    font-size: 13px;
    background: var(--cyan);
}
.history{
    display: flex;
    height: 42px;
    border-bottom: 1px solid #063046;

    p{
        flex: 1;
        padding: 1px 0 0 2px;
        line-height: 16px;
    }
    .scroll{
        justify-content: space-between;
    }
}
.prompt{
    display: flex;
    height: 19px;
    align-items: center;
    font-weight: bold;

    label{
        padding-left: 2px;
    }
    input{
        flex: 1;
        outline: none;
    }
}
.spin{
    display: flex;
    flex-direction: column;
    gap: 1px;
    width: 16px;
    background: #cfeaf3;

    button{
        height: 9px;
        background: #f3f3f3;
        border: 1px solid #999;
    }
    svg{
        display: block;
        width: 7px;
        height: 7px;
        margin: 0 auto;
        fill: #111;
    }
}
.tabs{
    display: flex;
    height: 28px;
    align-items: flex-end;
    font-family: "Open Sans", sans-serif;
    font-size: 11px;

    a{
        position: relative;
        isolation: isolate;
        height: 20px;
        line-height: 18px;
        padding: 0 6px 0 11px;
        border-radius: 0 6px 0 0;
        background: #2e4a56;
        clip-path: polygon(9px 0, 100% 0, 100% 100%, 0 100%, 0 12px);
    }
    /* lighter face, one pixel inside the outline */
    a::before{
        content: "";
        position: absolute;
        z-index: -1;
        inset: 1px 1px 0;
        border-radius: 0 5px 0 0;
        background: #dbe9ed;
        clip-path: polygon(9px 0, 100% 0, 100% 100%, 0 100%, 0 12px);
    }
    .current{
        padding-left: 12px;
    }
    .current::before{
        background: var(--cyan);
    }
    .add{
        padding: 0 10px 0 12px;
    }
    .add::before{
        background: #c3dfe8;
    }
    svg{
        width: 10px;
        height: 10px;
        fill: none;
        stroke: #333;
    }
}
.viewport{
    position: relative;
    flex: 1;
    min-height: 0;
    background: #000;
}
.scene{
    display: block;
    width: 100%;
    height: 100%;
}
.dim{
    fill: #fff;
    font-size: 48px;
}
.axis{
    font-family: "DejaVu Sans", sans-serif;
    font-size: 12px;
}
.z{
    fill: #dcbda0;
}
.y{
    fill: #6da7c0;
}
/* lies over the top left of the drawing */
.view-name{
    position: absolute;
    top: 0;
    left: 0;
    display: flex;
    height: 19px;
    padding-left: 9px;
    gap: 7px;
    background: var(--cyan);
    border-radius: 0 0 4px 0;
    font-family: "Open Sans", sans-serif;
    font-size: 12px;
    line-height: 18px;

    i{
        width: 12px;
        margin: 2px 0;
        border-left: 1px solid #063046;
    }
    svg{
        display: block;
        width: 8px;
        height: 8px;
        margin: 4px 0 0 1px;
        fill: #062b3c;
    }
}

/* taskbar */
footer{
    display: flex;
    justify-content: space-between;
    background: #1f1f23;
    color: #eee;
    font-family: "Open Sans", sans-serif;
    font-size: 11px;
}
.apps{
    display: flex;
    gap: 1px;

    button{
        width: 48px;
        height: 40px;
    }
    svg{
        display: block;
        width: 24px;
        height: 24px;
        margin: 0 auto;
    }
    .running{
        background: #47474b;
        border-bottom: 2px solid #b5dff0;
    }
}
.tray{
    display: flex;
    align-items: center;
    gap: 7px;
    padding-right: 21px;

    svg{
        width: 17px;
        height: 17px;
        fill: none;
        stroke: #eee;
    }
    .people{
        margin: 0 51px 0 16px;
    }
    .news{
        width: 23px;
    }
    .up{
        width: 12px;
        height: 8px;
        margin: 0 4px 0 9px;
    }
    .pen{
        margin-left: 4px;
    }
    .keys{
        width: 23px;
        margin-left: 4px;
    }
    time{
        margin: 0 16px 0 6px;
        font-size: 12px;
        line-height: 18px;
        text-align: center;
    }
}
.desktop sup{
    margin-left: 4px;
    font-size: 15px;
    line-height: 8px;
    vertical-align: 7px;
}
.weather{
    display: flex;
    gap: 9px;
    font-size: 13px;
}
.notes{
    position: relative;

    svg{
        display: block;
    }
    b{
        position: absolute;
        left: 6px;
        top: 6px;
        width: 15px;
        border: 1px solid #888;
        border-radius: 50%;
        background: #333;
        font-size: 10px;
        line-height: 13px;
        text-align: center;
    }
}
```
FILE: script.js
```js
const $ = (el) => document.querySelector(el)

// name, colour, visible
const sets = [
    [['Metal 01', '#00804f', 1], ['Metal 02', '#48b868', 0], ['Metal 03', '#7cf074', 1], ['Metal 04', '#bdffb0', 1]],
    [['User 01', '#f00000', 1], ['User 02', '#00f000', 0], ['User 03', '#0000e8', 0], ['User 04', '#828282', 1]],
    [['Gem 01', '#023a94', 1], ['Gem 02', '#3f73c6', 1], ['Gem 03', '#7caef2', 1], ['Gem 04', '#adcdfc', 1]],
    [['Heads', '#701a9c', 1], ['Finger', '#b23c3c', 1], ['Cutting', '#f87808', 0], ['Creation', '#fab51e', 0]]
]

const layerRow = ([name, color, on], extra = '') => `
    <div class="layer ${extra}">
        <span class="name">${name}</span>
        <button aria-label="Open ${name}"><svg viewBox="0 0 10 11"><path d="M3 1l5 4-5 5z"/></svg></button>
        <span class="swatch" style="background:${color}"></span>
        <button aria-label="Lock ${name}"><svg viewBox="0 0 10 11"><path d="M2 5h5V2H5v2H4V1h4v4h1v5H2z"/></svg></button>
        <button class="${on ? 'on' : 'off'}" aria-label="Toggle ${name}">${on ? 'I' : 'O'}</button>
    </div>`

$('#lights').innerHTML = layerRow(['Lights', '#fff', 1], 'picked')
$('#layers').innerHTML = sets.map((set) => `<div class="set"><div>${set.map((l) => layerRow(l)).join('')}</div></div>`).join('')

const metals = [
    ['Yellow Gold:9KY', '5.84', '3.76'],
    ['Yellow Gold:10KY', '6.04', '3.88'],
    ['Yellow Gold:14KY', '6.79', '4.37'],
    ['Yellow Gold:18KY', '8.12', '5.22'],
    ['Yellow Gold:18KY Royal', '8.12', '5.22'],
    ['Yellow Gold:22KY', '9.43', '6.06'],
    ['White Gold:9KW', '6.64', '4.27'],
    ['White Gold:10KX1', '5.89', '3.79'],
    ['White Gold:10KW', '5.79', '3.73'],
    ['White Gold:14KX1', '6.65', '4.27'],
    ['White Gold:14K PdW', '7.59', '4.88'],
    ['White Gold:14KW', '5.80', '3.73']
]
$('#metals').innerHTML = metals.map(([name, grams, dwt]) =>
    `<tr><td>${name}</td><td>${grams}</td><td>${dwt}</td><td></td></tr>`).join('')

const stones = [
    ['6.16', 1, '0.94tw'],
    ['1.50', 34, '0.43tw'],
    ['1.30', 8, '0.07tw'],
    ['2.00', 4, '0.12tw'],
    ['3.00', 2, '0.20tw'],
    ['2.50', 2, '0.12tw'],
    ['1.70', 30, '0.55tw'],
    ['1.20', 32, '0.21tw']
]
$('#stones').innerHTML = stones.map(([size, count, weight]) =>
    `<tr><td>${size} X ${size}</td><td>${count}</td><td>${weight}</td><td><button class="go" aria-label="Select ${size}"></button></td></tr>`).join('')
```
